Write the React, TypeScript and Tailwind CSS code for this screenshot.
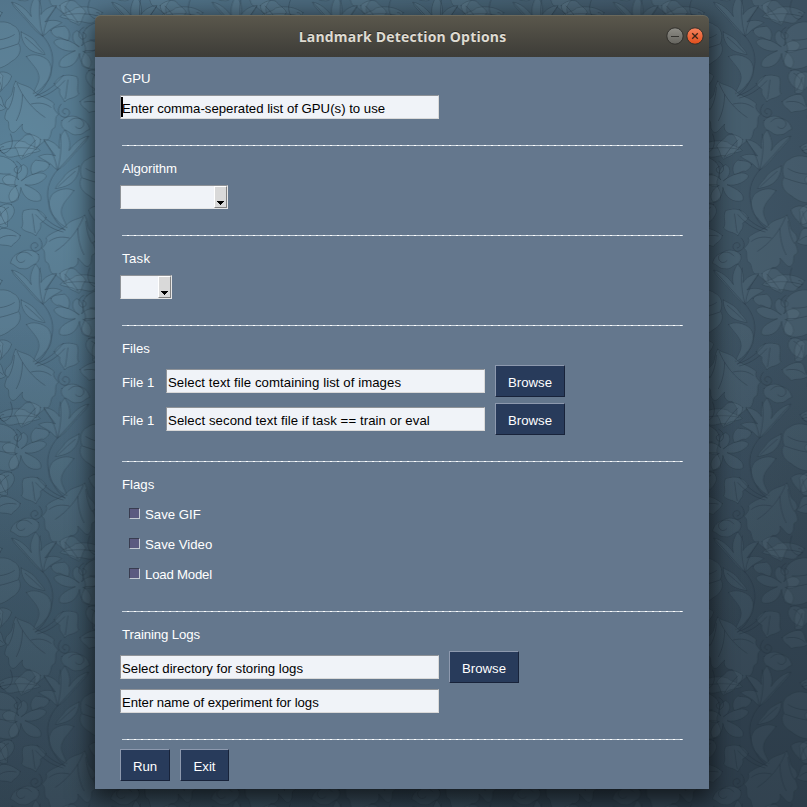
import type { ReactNode } from "react";

function Motif() {
  return (
    <g id="motif" strokeLinejoin="round" strokeLinecap="round">
      <g fill="#a3c2d2" fillOpacity="0.08" stroke="#14242f" strokeOpacity="0.34" strokeWidth="2.2">
        {/* plume */}
        <path d="M125 108C98 92 82 62 62 44C52 30 38 22 34 6C56 10 78 28 92 50C86 28 92 8 104 -12C118 2 124 22 120 44C130 28 148 18 166 16C160 34 142 50 132 66C150 58 168 60 182 68C164 80 146 86 136 100Z" />
        {/* rounded leaf */}
        <path d="M-40 84C-16 62 20 60 38 76C58 84 62 110 54 130C66 146 58 172 34 184C10 206 -26 216 -52 198C-64 170 -34 160 -46 134C-56 112 -50 96 -40 84Z" />
        {/* bud on the stem */}
        <path d="M78 170C96 158 126 166 142 182C158 206 152 236 132 252C124 266 110 274 98 282C104 258 118 246 114 226C110 206 96 196 78 170Z" />
        {/* acanthus */}
        <path d="M46 244C64 258 84 254 100 274C116 292 140 290 160 312C152 322 164 334 172 344C158 350 168 370 160 384C146 388 154 408 140 420C128 420 118 440 100 444C108 424 98 412 88 400C76 404 60 390 66 372C50 388 44 402 34 396C20 386 30 370 22 362C8 360 16 340 22 326C10 322 14 302 28 292C40 280 34 262 46 244Z" />
        {/* flower */}
        <path d="M232 140C212 130 206 100 226 92C244 100 250 122 240 138C256 118 282 118 288 136C284 156 260 160 244 154C268 166 276 190 262 204C244 202 234 180 234 160C228 190 204 208 176 200C168 180 190 166 222 152C196 158 166 144 158 126C170 108 204 118 232 140Z" />
        <path d="M150 92C158 78 176 82 190 78C206 90 208 108 200 122C184 118 176 108 168 112C160 108 152 104 150 92Z" />
        {/* pendant leaves */}
        <path d="M160 250C172 226 196 220 226 230C236 250 222 266 232 282C218 298 200 292 190 306C184 290 172 286 176 268C170 262 162 262 160 250Z" />
        <path d="M236 304C252 292 270 280 292 284C306 296 300 314 312 324C296 338 276 330 262 338C256 326 236 322 236 304Z" />
        {/* fan */}
        <path d="M-6 440C14 424 44 418 74 426C86 440 108 436 118 452C98 462 84 456 72 468C52 462 38 476 20 470C14 458 -2 456 -6 440Z" />
        {/* fillers between the main leaves */}
        <path d="M62 96C76 104 98 112 108 130C116 142 128 150 132 164C112 160 92 156 80 142C68 130 62 114 62 96Z" />
        <path d="M176 16C188 4 206 -2 222 4C230 18 248 22 252 38C240 50 244 66 232 76C218 66 204 68 198 52C188 44 176 34 176 16Z" />
        <path d="M262 212C278 206 294 214 304 228C298 244 306 258 296 272C280 268 266 262 258 246C250 234 252 220 262 212Z" />
        <path d="M182 362C196 346 220 344 236 356C250 360 262 372 264 388C250 392 244 406 228 404C212 408 204 394 192 390C182 384 178 374 182 362Z" />
        <path d="M-14 222C2 212 22 214 34 228C30 244 20 256 8 266C2 280 -12 284 -22 278C-20 262 -30 244 -14 222Z" />
      </g>
      <g fill="none" stroke="#14242f" strokeOpacity="0.36" strokeWidth="2.4">
        <path d="M36 8C70 44 96 78 126 108C152 138 162 176 150 214C142 248 126 272 104 288" />
        <path d="M118 0C112 40 118 78 126 108M166 18C142 50 130 78 128 104" />
        <path d="M50 250C66 292 96 328 132 352M66 284C66 310 60 340 48 362M92 312C116 306 134 310 150 322M42 262C40 290 34 312 24 328" />
        <path d="M-44 152C-10 154 24 142 52 132M-30 120C0 122 24 116 42 104" />
        <path d="M104 288C140 276 166 252 186 226M110 294C150 284 172 262 190 242" />
        <path d="M180 312C164 330 172 350 190 352C210 350 208 326 192 326C180 328 182 342 192 342" />
        <path d="M246 82C230 90 226 110 242 118C258 116 256 98 244 98M202 366C214 350 236 350 246 366C250 384 232 392 222 380" />
        <path d="M0 452C30 442 70 440 108 448M200 240C196 262 196 280 192 296M248 306C268 302 288 304 304 320" />
        <path d="M264 0C252 30 262 52 284 58C300 54 298 36 284 38M270 220C290 232 302 250 298 270" />
        <path d="M190 18C206 34 220 52 230 70M0 232C-4 248 -10 262 -18 272M74 112C90 126 108 142 124 158" />
      </g>
    </g>
  );
}

function Wallpaper() {
  const xs = [-295, 0, 295];
  const ys = [-804, 0, 804];
  return (
    <svg className="absolute inset-0 h-full w-full" aria-hidden="true">
      <defs>
        <Motif />
        <pattern id="damask" width="295" height="804" patternUnits="userSpaceOnUse" patternTransform="scale(0.34 0.3333)">
          <rect width="295" height="804" fill="#12283a" fillOpacity="0.1" />
          {ys.flatMap((y) =>
            xs.map((x) => (
              <g key={`${x}:${y}`}>
                <use href="#motif" transform={`translate(${x} ${y})`} />
                <use href="#motif" transform={`translate(${x + 295} ${y + 402}) scale(-1 1)`} />
              </g>
            )),
          )}
        </pattern>
      </defs>
      <rect width="100%" height="100%" fill="url(#damask)" />
    </svg>
  );
}

function Label({ children, className = "" }: { children: ReactNode; className?: string }) {
  return <div className={`h-5 pt-px pl-0.5 leading-5 text-white ${className}`}>{children}</div>;
}

function Rule({ className }: { className: string }) {
  return (
    <div
      className={`ml-0.5 h-px w-[561px] shrink-0 bg-[repeating-linear-gradient(90deg,#ccd6df_0px,#ccd6df_5px,#ffffff_5px,#ffffff_7px)] ${className}`}
    />
  );
}

function Field({ text, caret, className = "" }: { text: string; caret?: boolean; className?: string }) {
  return (
    <div
      className={`flex h-6 w-[319px] items-center border border-t-[#8f9398] border-r-[#d9d9d9] border-b-[#d9d9d9] border-l-[#8f9398] bg-[#f0f3f8] text-black ${className}`}
    >
      <span className={`-mr-px h-5 w-0.5 shrink-0 ${caret ? "bg-black" : ""}`} />
      <span className="whitespace-nowrap pt-[3px] leading-5">{text}</span>
    </div>
  );
}

function Combo({ width }: { width: string }) {
  return (
    <div className={`flex h-6 justify-end border border-t-[#8f9398] border-r-[#e6e6e6] border-b-[#e6e6e6] border-l-[#8f9398] bg-[#f0f3f8] ${width}`}>
      <div className="flex w-[13px] items-end justify-center border border-t-white border-r-[#828282] border-b-[#828282] border-l-white bg-[#d9d9d9] pb-[2px]">
        <svg width="7" height="4" viewBox="0 0 7 4" shapeRendering="crispEdges">
          <path d="M0 0H7V1H6V2H5V3H4V4H3V3H2V2H1V1H0Z" fill="#000" />
        </svg>
      </div>
    </div>
  );
}

function Button({ children, width }: { children: ReactNode; width: string }) {
  return (
    <button
      className={`flex h-8 items-center justify-center border border-t-[#8d99ae] border-r-[#18233a] border-b-[#18233a] border-l-[#8d99ae] bg-[#283b5b] pt-1 text-white ${width}`}
    >
      {children}
    </button>
  );
}

function Check({ children, className = "" }: { children: ReactNode; className?: string }) {
  return (
    <div className="flex h-5 items-center pl-[9px] text-white">
      <span className="mb-0.5 h-[11px] w-[11px] border border-t-[#383c50] border-r-[#c3c9d2] border-b-[#c3c9d2] border-l-[#383c50] bg-[#5b5a80]" />
      <span className={`ml-[5px] pt-0.5 leading-5 ${className}`}>{children}</span>
    </div>
  );
}

function TitleBar() {
  return (
    <div className="flex h-[42px] items-center rounded-t-[6px] border-t border-[#6b695c] bg-linear-to-b from-[#5a574c] to-[#3d3c37] pr-[5px]">
      <div className="w-[44px]" />
      <div className="flex-1 text-center font-['Open_Sans','Noto_Sans',sans-serif] text-[14px] font-bold tracking-[0.2px] text-[#dfdbd2] [text-shadow:0_-1px_0_#2c2b27]">
        Landmark Detection Options
      </div>
      <div className="mb-px flex gap-[2px]">
        <svg width="18" height="18" viewBox="0 0 18 18">
          <defs>
            <linearGradient id="min" x2="0" y2="1">
              <stop stopColor="#8f8e87" />
              <stop offset="1" stopColor="#65645e" />
            </linearGradient>
          </defs>
          <circle cx="9" cy="9" r="8.2" fill="url(#min)" stroke="#302f2b" />
          <path d="M5 9.5H13" stroke="#34332f" />
        </svg>
        <svg width="18" height="18" viewBox="0 0 18 18">
          <defs>
            <linearGradient id="close" x2="0" y2="1">
              <stop stopColor="#f5845f" />
              <stop offset="1" stopColor="#e24e1b" />
            </linearGradient>
          </defs>
          <circle cx="9" cy="9" r="8.2" fill="url(#close)" stroke="#302f2b" />
          <path d="M6.2 6.2L11.8 11.8M11.8 6.2L6.2 11.8" stroke="#3b2418" strokeWidth="1.3" />
        </svg>
      </div>
    </div>
  );
}

const files = [
  { text: "Select text file comtaining list of images", className: "tracking-[0.07px]" },
  { text: "Select second text file if task == train or eval", className: "tracking-[0.08px]" },
];

export default function App() {
  return (
    <div className="relative h-[807px] w-[807px] overflow-hidden bg-[#364651] bg-[radial-gradient(ellipse_900px_860px_at_10px_150px,#618aa1_0%,#587b91_22%,#4c697b_48%,#455c6c_75%,#3c4f5d_100%)] pt-[15px] pl-[95px]">
      <Wallpaper />
      <div className="absolute inset-0 bg-linear-to-b from-transparent from-40% to-[#16202a]/35" />
      <div className="relative w-[614px] rounded-t-[6px] font-['Liberation_Sans',Arial,sans-serif] text-[13.2px] shadow-[0_7px_24px_3px_rgba(0,0,0,0.65)]">
        <TitleBar />
        <main className="flex h-[732px] flex-col bg-[#64778d] pt-[11px] pl-[25px]">
          <Label>GPU</Label>
          <div className="mt-[7px]">
            <Field text="Enter comma-seperated list of GPU(s) to use" caret />
          </div>
          <Rule className="mt-[26px]" />

          <div className="mt-3">
            <Label className="tracking-[-0.08px]">Algorithm</Label>
          </div>
          <div className="mt-[7px]">
            <Combo width="w-[108px]" />
          </div>
          <Rule className="mt-[26px]" />

          <div className="mt-3">
            <Label className="tracking-[0.3px]">Task</Label>
          </div>
          <div className="mt-[7px]">
            <Combo width="w-[52px]" />
          </div>
          <Rule className="mt-[26px]" />

          <div className="mt-3">
            <Label>Files</Label>
          </div>
          <div className="mt-[7px] flex flex-col gap-1.5">
            {files.map((file) => (
              <div key={file.text} className="flex h-8 items-center">
                <div className="w-[46px] pt-px">
                  <Label>File 1</Label>
                </div>
                <Field text={file.text} className={file.className} />
                <div className="ml-2.5">
                  <Button width="w-[70px]">Browse</Button>
                </div>
              </div>
            ))}
          </div>
          <Rule className="mt-[26px]" />

          <div className="mt-3">
            <Label>Flags</Label>
          </div>
          <div className="mt-2.5 flex flex-col gap-2.5">
            <Check>Save GIF</Check>
            <Check>Save Video</Check>
            <Check className="tracking-[-0.2px]">Load Model</Check>
          </div>
          <Rule className="mt-[27px]" />

          <div className="mt-3">
            <Label className="tracking-[-0.12px]">Training Logs</Label>
          </div>
          <div className="mt-[7px] flex h-8 items-center gap-2.5">
            <Field text="Select directory for storing logs" />
            <Button width="w-[70px]">Browse</Button>
          </div>
          <div className="mt-1.5">
            <Field text="Enter name of experiment for logs" className="tracking-[-0.06px]" />
          </div>
          <Rule className="mt-[26px]" />

          <div className="mt-[9px] flex gap-2.5">
            <Button width="w-[50px]">Run</Button>
            <Button width="w-[49px]">Exit</Button>
          </div>
        </main>
      </div>
    </div>
  );
}
